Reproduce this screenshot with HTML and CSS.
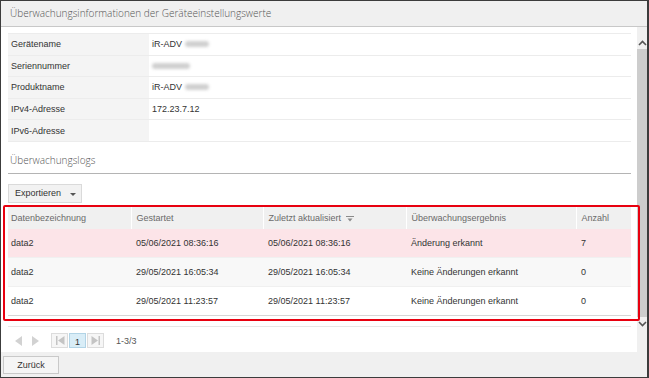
FILE: index.html
```html
<!DOCTYPE html>
<html>
<head>
    <meta charset="utf-8">
    <title>Überwachungsinformationen</title>
    <link rel="stylesheet" href="styles.css">
</head>
<body>
<div class="window">
    <div class="title-bar">Überwachungsinformationen der Geräteeinstellungswerte</div>

    <div class="main">
        <div class="content">
            <div class="info">
                <div class="info-row"><div class="info-label">Gerätename</div><div class="info-value">iR-ADV <span class="blur short"></span></div></div>
                <div class="info-row"><div class="info-label">Seriennummer</div><div class="info-value"><span class="blur long"></span></div></div>
                <div class="info-row"><div class="info-label">Produktname</div><div class="info-value">iR-ADV <span class="blur short"></span></div></div>
                <div class="info-row"><div class="info-label">IPv4-Adresse</div><div class="info-value">172.23.7.12</div></div>
                <div class="info-row"><div class="info-label">IPv6-Adresse</div><div class="info-value"></div></div>
            </div>

            <div class="section-title">Überwachungslogs</div>

            <div class="toolbar">
                <button class="export-button">Exportieren <span class="caret"></span></button>
            </div>

            <table class="log-table">
                <thead>
                    <tr>
                        <th class="col-name">Datenbezeichnung</th>
                        <th class="col-start">Gestartet</th>
                        <th class="col-update">Zuletzt aktualisiert
                            <svg class="sort-icon" width="8" height="7" viewBox="0 0 8 7"><path d="M0 1.5h8" stroke="#8a8a8a" stroke-width="1"/><path d="M1.5 3.5h5l-2.5 3z" fill="#8a8a8a"/></svg>
                        </th>
                        <th class="col-result">Überwachungsergebnis</th>
                        <th class="col-count">Anzahl</th>
                    </tr>
                </thead>
                <tbody>
                    <tr class="changed">
                        <td>data2</td>
                        <td>05/06/2021 08:36:16</td>
                        <td>05/06/2021 08:36:16</td>
                        <td>Änderung erkannt</td>
                        <td>7</td>
                    </tr>
                    <tr class="odd">
                        <td>data2</td>
                        <td>29/05/2021 16:05:34</td>
                        <td>29/05/2021 16:05:34</td>
                        <td>Keine Änderungen erkannt</td>
                        <td>0</td>
                    </tr>
                    <tr>
                        <td>data2</td>
                        <td>29/05/2021 11:23:57</td>
                        <td>29/05/2021 11:23:57</td>
                        <td>Keine Änderungen erkannt</td>
                        <td>0</td>
                    </tr>
                </tbody>
            </table>

            <div class="pager">
                <span class="pager-arrow"><svg width="9" height="10" viewBox="0 0 9 10"><path d="M8 0v10L1 5z" fill="#d2d2d2"/></svg></span>
                <span class="pager-arrow"><svg width="9" height="10" viewBox="0 0 9 10"><path d="M1 0v10l7-5z" fill="#d2d2d2"/></svg></span>
                <span class="pager-box first"><svg width="10" height="9" viewBox="0 0 10 9"><path d="M1 0h1.5v9H1z M9.5 0v9L3 4.5z" fill="#c4c4c4"/></svg></span>
                <span class="pager-box current">1</span>
                <span class="pager-box"><svg width="10" height="9" viewBox="0 0 10 9"><path d="M7.5 0H9v9H7.5z M0.5 0v9L7 4.5z" fill="#c4c4c4"/></svg></span>
                <span class="pager-info">1-3/3</span>
            </div>
        </div>

        <div class="scrollbar">
            <div class="scroll-arrow"><svg width="9" height="6" viewBox="0 0 9 6"><path d="M1 5l3.5-3.5L8 5" stroke="#555" stroke-width="1.6" fill="none"/></svg></div>
            <div class="scroll-thumb"></div>
            <div class="scroll-arrow"><svg width="9" height="6" viewBox="0 0 9 6"><path d="M1 1l3.5 3.5L8 1" stroke="#555" stroke-width="1.6" fill="none"/></svg></div>
        </div>

        <div class="highlight"></div>
    </div>

    <div class="footer">
        <button class="back-button">Zurück</button>
    </div>
</div>
</body>
</html>
```

FILE: styles.css
```css
body {
    margin: 0;
    font-family: "Liberation Sans", Arial, sans-serif;
    font-size: 9px;
    color: #333;
}

.window {
    height: 378px;
    box-sizing: border-box;
    border: 1px solid #3c3c3c;
    border-right-width: 2px;
    display: flex;
    flex-direction: column;
    background-color: white;
}

.title-bar {
    height: 25px;
    flex-shrink: 0;
    background-color: #f0f0f0;
    border-bottom: 1px solid #c8c8c8;
    padding-left: 9px;
    line-height: 25px;
    font-family: "Open Sans", sans-serif;
    font-weight: 300;
    font-size: 10px;
    color: #555;
}

.main {
    flex: 1;
    display: flex;
    position: relative;
    overflow: hidden;
}

.content {
    flex: 1;
    padding: 6px 6px 0 7px;
}

/* device info */

.info {
    border-top: 1px solid #ececec;
}

.info-row {
    display: flex;
    height: 21.6px;
    box-sizing: border-box;
    border-bottom: 1px solid #ececec;
}

.info-label {
    width: 138px;
    padding-left: 3px;
    background-color: #f4f4f4;
    display: flex;
    align-items: center;
}

.info-value {
    flex: 1;
    padding-left: 3px;
    display: flex;
    align-items: center;
    gap: 3px;
}

.blur {
    display: inline-block;
    height: 6px;
    border-radius: 3px;
    background-color: #d0d0d0;
    filter: blur(1.5px);
}

.blur.short {
    width: 24px;
}

.blur.long {
    width: 38px;
}

.section-title {
    margin-top: 11px;
    padding: 0 0 6px 2px;
    border-bottom: 1px solid #b4b4b4;
    font-family: "Open Sans", sans-serif;
    font-weight: 300;
    font-size: 10px;
    color: #555;
}

/* log table */

.toolbar {
    margin-top: 10px;
}

.export-button {
    font-family: inherit;
    font-size: 9px;
    color: #333;
    background-color: #f2f2f2;
    border: 1px solid #dadada;
    height: 19px;
    width: 74px;
    padding: 0 0 0 6px;
    text-align: left;
    white-space: nowrap;
}

.caret {
    display: inline-block;
    margin-left: 6px;
    border-left: 3px solid transparent;
    border-right: 3px solid transparent;
    border-top: 3px solid #555;
    vertical-align: middle;
}

.log-table {
    width: 100%;
    margin-top: 4px;
    border-collapse: collapse;
    table-layout: fixed;
    border-bottom: 1px solid #d6d6d6;
}

.log-table th,
.log-table td {
    box-sizing: border-box;
    white-space: nowrap;
}

.log-table th {
    height: 22px;
    background-color: #f0f0f0;
    border-left: 1px solid white;
    font-weight: normal;
    color: #6a6a6a;
    text-align: left;
    padding: 0 0 0 5px;
}

.log-table th:first-child {
    border-left: none;
}

.log-table td {
    height: 29px;
    padding: 0 0 0 5px;
    border-top: 1px solid #f0f0f0;
}

.log-table th:first-child,
.log-table td:first-child {
    padding-left: 3px;
}

.col-name { width: 123px; }
.col-start { width: 132px; }
.col-update { width: 143px; }
.col-result { width: 170px; }

.sort-icon {
    margin-left: 2px;
    vertical-align: -1px;
}

.log-table tr.changed td {
    background-color: #fce4e8;
}

.log-table tr.odd td {
    background-color: #f8f8f8;
}

/* paging */

.pager {
    margin-top: 10px;
    border-top: 1px solid #e6e6e6;
    display: flex;
    align-items: center;
    padding-top: 6px;
    padding-left: 2px;
}

.pager-arrow {
    width: 16px;
    display: flex;
    justify-content: center;
    margin-right: 1px;
}

.pager-arrow + .pager-arrow {
    margin-right: 8px;
}

.pager-box {
    width: 15px;
    height: 13px;
    border: 1px solid #dcdcdc;
    background-color: #f6f6f6;
    margin-right: 1px;
    display: flex;
    align-items: center;
    justify-content: center;
}

.pager-box.current {
    background-color: #d9edf7;
    border-color: #b2d4e6;
    color: #333;
    padding-top: 2px;
    box-sizing: border-box;
    width: 17px;
    height: 15px;
}

.pager-info {
    margin-left: 11px;
    color: #555;
}

/* scrollbar */

.scrollbar {
    width: 10px;
    background-color: #f0f0f0;
    display: flex;
    flex-direction: column;
    padding-top: 9px;
}

.scroll-arrow {
    height: 13px;
    display: flex;
    align-items: center;
    justify-content: center;
}

.scroll-thumb {
    height: 268px;
    background-color: #cdcdcd;
}

.highlight {
    position: absolute;
    left: 2px;
    top: 178px;
    width: 633px;
    height: 112px;
    border: 2px solid #e8000f;
    border-radius: 2px;
}

/* footer */

.footer {
    height: 25px;
    flex-shrink: 0;
    background-color: #f0f0f0;
    padding: 4px 0 0 2px;
    box-sizing: border-box;
}

.back-button {
    font-family: inherit;
    font-size: 9px;
    color: #333;
    width: 56px;
    height: 18px;
    background-color: #f5f5f5;
    border: 1px solid #c9c9c9;
}
```
